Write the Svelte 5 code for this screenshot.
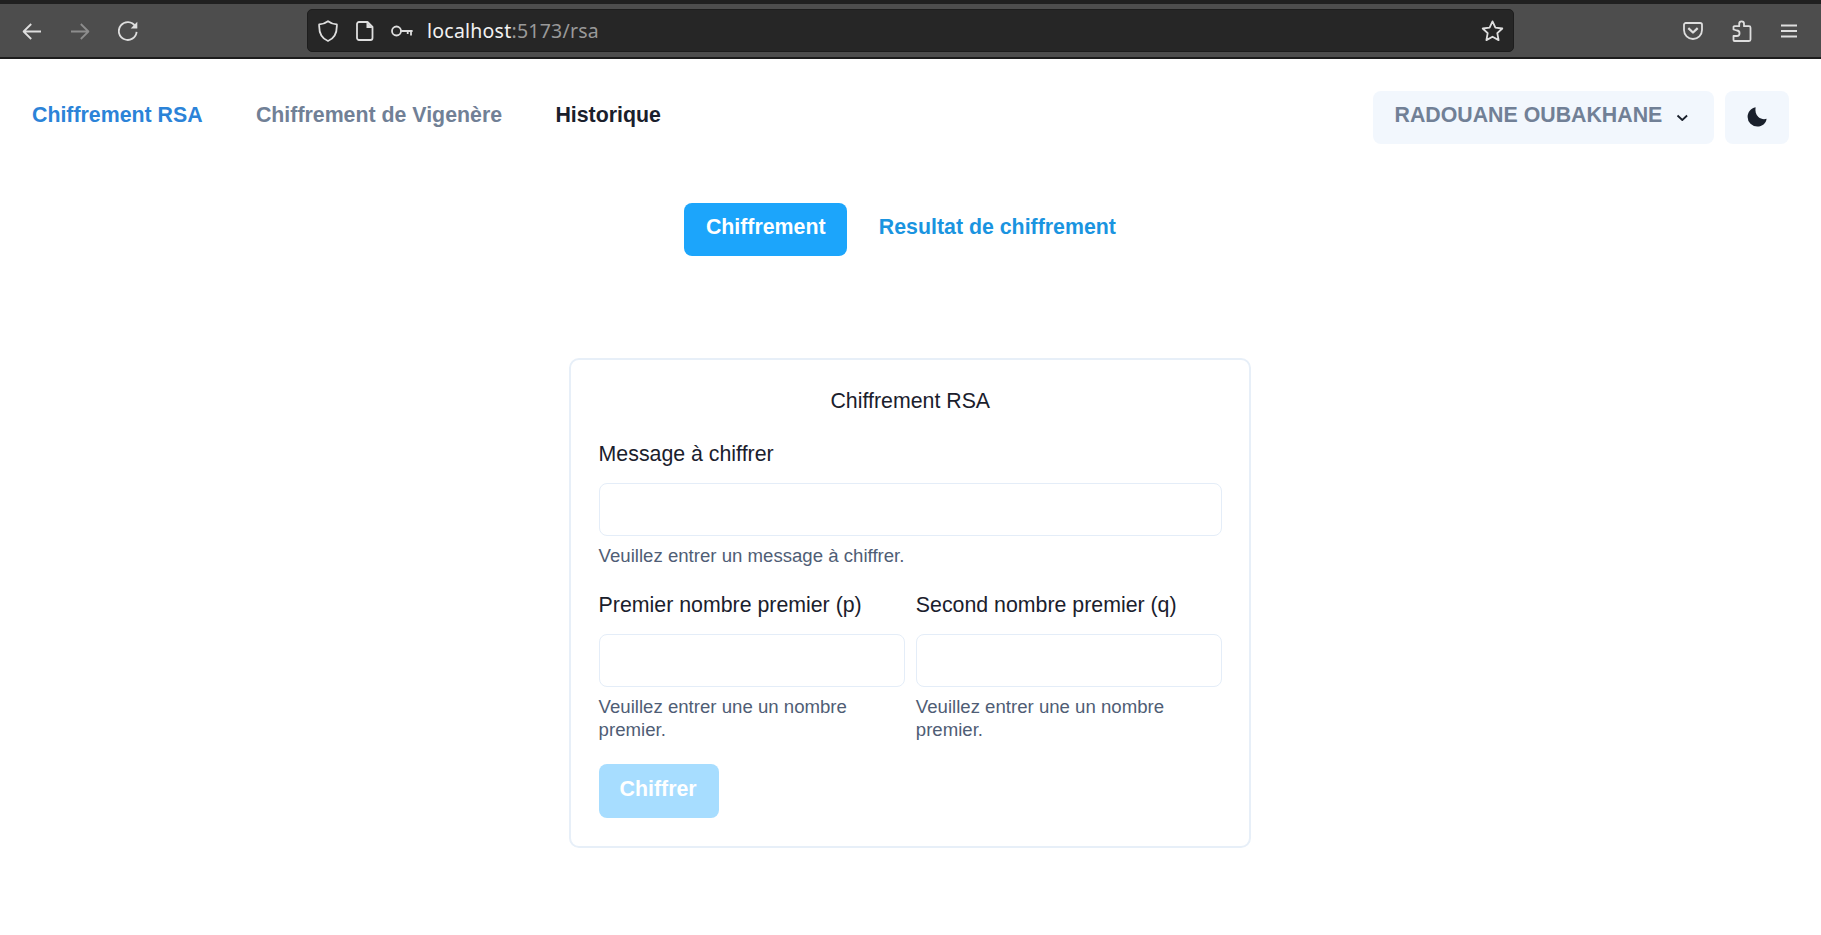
<script lang="ts">
  const links = [
    { label: 'Chiffrement RSA', tone: 'active' },
    { label: 'Chiffrement de Vigenère', tone: 'muted' },
    { label: 'Historique', tone: 'dark' },
  ];
  const primes = [
    { id: 'p', label: 'Premier nombre premier (p)' },
    { id: 'q', label: 'Second nombre premier (q)' },
  ];
</script>

<div class="browser">
  <div class="strip"></div>
  <div class="toolbar">
    <div class="history">
      <svg width="20" height="20" viewBox="0 0 20 20"><path d="M19 10.500H1.600M9.200 3 1.600 10.500l7.600 7.500" /></svg>
      <svg class="off" width="20" height="20" viewBox="0 0 20 20"><path d="M1 10.500h17.400M10.800 3l7.600 7.500-7.600 7.500" /></svg>
      <svg width="20" height="20" viewBox="0 0 20 20"><path d="M17.200 5.200A8.900 8.900 0 1 0 18.600 10.800" /><path class="solid" d="M19.300.8v6.600h-6.600z" /></svg>
    </div>
    <div class="url">
      <svg width="20" height="22" viewBox="0 0 20 22"><path d="M10 1.200c2.600 2 5.200 3 8.800 3.200C19.200 12.500 16.500 18.500 10 21 3.500 18.500.8 12.500 1.200 4.400 4.800 4.200 7.400 3.200 10 1.200Z" /></svg>
      <svg class="doc" width="18" height="20" viewBox="0 0 18 20"><path d="M3 1h8.500l5 5v11a2 2 0 0 1-2 2H3a2 2 0 0 1-2-2V3a2 2 0 0 1 2-2Z" /><path class="solid" d="M10.500 1v6h6z" /></svg>
      <svg class="key" width="22" height="12" viewBox="0 0 22 12"><circle cx="5.500" cy="6" r="4.500" /><path d="M10 6h11.600M20 6v4.500M16.700 6v3" /></svg>
      <span class="address"><b>localhost</b>:5173/rsa</span>
      <svg class="star" width="23" height="22" viewBox="0 0 23 22"><path d="m11.500 1.400 2.900 6.200 6.900.9-5 4.700 1.300 6.900-6.100-3.400-6.100 3.400 1.300-6.900-5-4.700 6.900-.9Z" /></svg>
    </div>
    <div class="tools">
      <svg width="20" height="18" viewBox="0 0 20 18"><path d="M2.800 1h14.400A1.800 1.800 0 0 1 19 2.800V8A9 9 0 0 1 1 8V2.800A1.800 1.800 0 0 1 2.800 1Z" /><path class="bold" d="m5.300 6.200 4.700 4.300 4.700-4.300" /></svg>
      <svg width="20" height="22" viewBox="0 0 20 22"><path d="M1.500 9.500V7.200a1 1 0 0 1 1-1h4.700V3.700a2.400 2.400 0 0 1 4.800 0v2.500h5a1.500 1.500 0 0 1 1.500 1.500v11.800a1.500 1.500 0 0 1-1.500 1.500H2.500a1 1 0 0 1-1-1v-4h3.300a2.300 2.300 0 0 0 0-5.500Z" /></svg>
      <svg width="16" height="14" viewBox="0 0 16 14"><path d="M0 1.500h16M0 7h16M0 12.500h16" /></svg>
    </div>
  </div>
</div>

<header>
  <nav>
    {#each links as link}
      <a href="#top" class={link.tone}>{link.label}</a>
    {/each}
  </nav>
  <div class="account">
    <button class="soft user">
      <span>RADOUANE OUBAKHANE</span>
      <svg width="13" height="8" viewBox="0 0 13 8"><path d="m1.500 1.500 4.800 4.500 4.800-4.500" /></svg>
    </button>
    <button class="soft mode" aria-label="Mode sombre">
      <svg width="20" height="20" viewBox="0 0 20 20"><path d="M8.600.2C3.800 1.200.6 5.200.6 10a9.700 9.700 0 0 0 9.800 9.600c4.800 0 8.600-3.200 9.200-7.800-2.400.8-5.800.5-8.200-1.700C8.800 7.700 8 4 8.600.2Z" /></svg>
    </button>
  </div>
</header>

<div class="tabs">
  <button class="tab selected">Chiffrement</button>
  <button class="tab">Resultat de chiffrement</button>
</div>

<form class="card">
  <h1>Chiffrement RSA</h1>
  <div class="field">
    <label for="message">Message à chiffrer</label>
    <input id="message" />
    <p>Veuillez entrer un message à chiffrer.</p>
  </div>
  <div class="pair">
    {#each primes as prime}
      <div class="field">
        <label for={prime.id}>{prime.label}</label>
        <input id={prime.id} />
        <p>Veuillez entrer une un nombre premier.</p>
      </div>
    {/each}
  </div>
  <button class="submit" type="button">Chiffrer</button>
</form>

<style>
  :global(body) {
    background: #fff;
    overflow: hidden;
    font-family: 'Liberation Sans', Arial, sans-serif;
    font-size: 21.33px;
    line-height: 32px;
    color: #1a202c;
  }
  button, input {
    font: inherit;
    border: 0;
    margin: 0;
    box-sizing: border-box;
  }
  svg {
    display: block;
    flex: none;
    fill: none;
    stroke: #dedede;
    stroke-width: 1.8;
    stroke-linejoin: round;
  }
  .strip {
    height: 4px;
    background: #202020;
  }
  .toolbar {
    height: 55px;
    box-sizing: border-box;
    background: #4d4d4d;
    border-bottom: 2px solid #1c1c1c;
    display: flex;
    align-items: center;
  }
  .history {
    width: 307px;
    box-sizing: border-box;
    padding-left: 22px;
    display: flex;
    gap: 28px;
  }
  .off { stroke: #8d8d8d; }
  .solid { fill: #dedede; stroke: none; }
  .bold { stroke-width: 2.3; }
  .url {
    width: 1207px;
    height: 43px;
    box-sizing: border-box;
    border-radius: 5px;
    background: #262626;
    border: 1px solid #1d1d1d;
    padding: 0 9px 0 10px;
    display: flex;
    align-items: center;
  }
  .doc { margin-left: 18px; }
  .key { margin-left: 17px; }
  .address {
    margin-left: 14px;
    padding-top: 1px;
    font-family: 'Noto Sans', sans-serif;
    font-size: 19.500px;
    letter-spacing: 0.230px;
    color: #999;
  }
  .address b {
    font-weight: 400;
    color: #f2f2f2;
  }
  .star { margin-left: auto; }
  .tools {
    flex: 1;
    display: flex;
    align-items: center;
    justify-content: flex-end;
    gap: 29px;
    padding-right: 24px;
  }
  header {
    height: 53px;
    padding: 32px 32px 0;
    display: flex;
    justify-content: space-between;
  }
  nav {
    display: flex;
    gap: 53.300px;
    padding-top: 8px;
    font-weight: 700;
  }
  a { text-decoration: none; }
  .active { color: #2b83d8; }
  .muted { color: #718096; }
  .dark { color: #1a202c; }
  .account {
    display: flex;
    gap: 11px;
  }
  .soft {
    height: 53px;
    background: #f2f7fd;
    border-radius: 8px;
    display: flex;
    align-items: center;
  }
  .user {
    width: 341px;
    padding: 0 25px 0 21.500px;
    justify-content: space-between;
    color: #718096;
    font-weight: 700;
  }
  .user span { padding-bottom: 5px; }
  .user svg { stroke: #1a202c; stroke-width: 1.8; }
  .mode {
    width: 64px;
    padding: 0 0 1px;
    justify-content: center;
  }
  .mode svg { fill: #1a202c; stroke: none; }
  .tabs {
    display: flex;
    padding: 59px 0 0 684px;
    gap: 10.700px;
  }
  .tab {
    height: 53px;
    padding: 0 21.300px 5px;
    border-radius: 8px;
    background: none;
    color: #1a94e0;
    font-weight: 700;
  }
  .selected {
    padding-left: 21.900px;
    background: #1ca5fb;
    color: #fff;
  }
  .card {
    width: 682px;
    height: 490px;
    box-sizing: border-box;
    margin: 101.500px 0 0 569.300px;
    border: 2.670px solid #e7eff8;
    border-radius: 10px;
    padding: 25.500px 27.300px;
  }
  h1 {
    margin: 0 0 21.300px;
    font-size: inherit;
    font-weight: 400;
    text-align: center;
  }
  .field {
    display: flex;
    flex-direction: column;
    min-width: 0;
  }
  label { margin-bottom: 12.500px; }
  input {
    width: 100%;
    height: 53.500px;
    border: 1.330px solid #e4edf8;
    border-radius: 8px;
    background: #fff;
  }
  p {
    margin: 8px 0 0;
    font-size: 18.620px;
    line-height: 23px;
    color: #4f5d75;
  }
  .pair {
    display: grid;
    grid-template-columns: 1fr 1fr;
    gap: 11px;
    margin-top: 22px;
  }
  .submit {
    display: block;
    width: 120px;
    height: 54px;
    margin-top: 23px;
    padding: 0 1px 4px 0;
    border-radius: 8px;
    background: #a7ddff;
    color: #fff;
    font-weight: 700;
  }
</style>
